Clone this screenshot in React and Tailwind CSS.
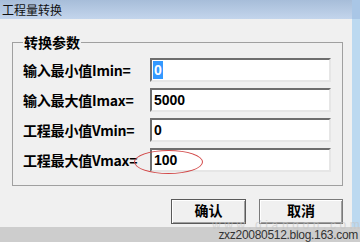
import React from "react";

const cjk = { fontFamily: '"Noto Sans CJK SC", "Liberation Sans", sans-serif' };
const lat = { fontFamily: '"Liberation Sans", "Noto Sans CJK SC", sans-serif' };

function Row({ label, value, selected }) {
  return (
    <div className="flex items-center h-[24px]">
      <div className="w-[127px] text-[14px] font-bold leading-[16px] text-black whitespace-nowrap tracking-[-0.2px]" style={cjk}>
        {label}
      </div>
      <div className="w-[181px] h-[24px] bg-white border-2 border-t-[#6e6e6e] border-l-[#6e6e6e] border-r-[#e6e6e6] border-b-[#e6e6e6] flex items-center pl-[1px]">
        {selected ? (
          <span className="bg-[#3399ff] text-white text-[14px] font-bold leading-[18px] px-[1px]" style={lat}>{value}</span>
        ) : (
          <span className="text-black text-[14px] font-bold leading-[18px] px-[1px]" style={lat}>{value}</span>
        )}
      </div>
    </div>
  );
}

export default function App() {
  return (
    <div className="w-[360px] h-[242px] bg-[#f0f0f0] flex flex-col overflow-hidden relative">
      <div className="flex h-[227px]">
        <div className="w-[352px] flex flex-col">
          <div className="h-[19px] bg-gradient-to-b from-[#a7bdd9] to-[#c3d5ec] flex items-center pl-[2px]">
            <span className="text-[12px] leading-[14px] text-[#111]" style={cjk}>工程量转换</span>
          </div>
          <div className="flex-1 bg-[#f0f0f0] px-[12px]">
            <fieldset className="mt-[15px] w-[331px] border border-[#a0a0a0] pl-[10px] pr-[11px] pb-[13px]">
              <legend className="px-[1px] text-[14px] font-bold leading-[16px] text-black" style={cjk}>转换参数</legend>
              <div className="flex flex-col gap-[6px] pt-[8px]">
                <Row label="输入最小值Imin=" value="0" selected />
                <Row label="输入最大值Imax=" value="5000" />
                <Row label="工程最小值Vmin=" value="0" />
                <Row label="工程最大值Vmax=" value="100" />
              </div>
            </fieldset>
            <div className="flex justify-end gap-[13px] mt-[13px] mr-[-3px]">
              <button className="w-[75px] h-[25px] bg-[#f0f0f0] border border-[#5a5a5a] shadow-[inset_1px_1px_0_#ffffff,inset_-1px_-1px_0_#a0a0a0] text-[14px] font-bold leading-[16px] text-black flex items-center justify-center pb-[3px]" style={cjk}>确认</button>
              <button className="w-[84px] h-[25px] bg-[#f0f0f0] border border-[#7a7a7a] shadow-[inset_1px_1px_0_#ffffff,inset_-1px_-1px_0_#a0a0a0] text-[14px] font-bold leading-[16px] text-black flex items-center justify-center pb-[3px]" style={cjk}>取消</button>
            </div>
          </div>
        </div>
        <div className="w-[8px] flex flex-col">
          <div className="h-[19px] bg-[#a9c6e6]"></div>
          <div className="flex-1 bg-[#bcd9f0]"></div>
        </div>
      </div>
      <div className="h-[15px] bg-[#cdcdcd] flex justify-end items-center pr-[2px]">
        <span className="text-[12px] leading-[14px] text-[#333] tracking-[-0.3px]" style={lat}>zxz20080512.blog.163.com</span>
      </div>
      <div className="absolute left-[134px] top-[150px] w-[69px] h-[24px] rounded-[50%] border border-[#d24848] pointer-events-none"></div>
      <div className="absolute left-[212px] top-[219px] text-[12px] leading-[12px] tracking-[3.6px] text-[#c4c4c4] opacity-60 pointer-events-none" style={lat}>www.diangon.com</div>
    </div>
  );
}
